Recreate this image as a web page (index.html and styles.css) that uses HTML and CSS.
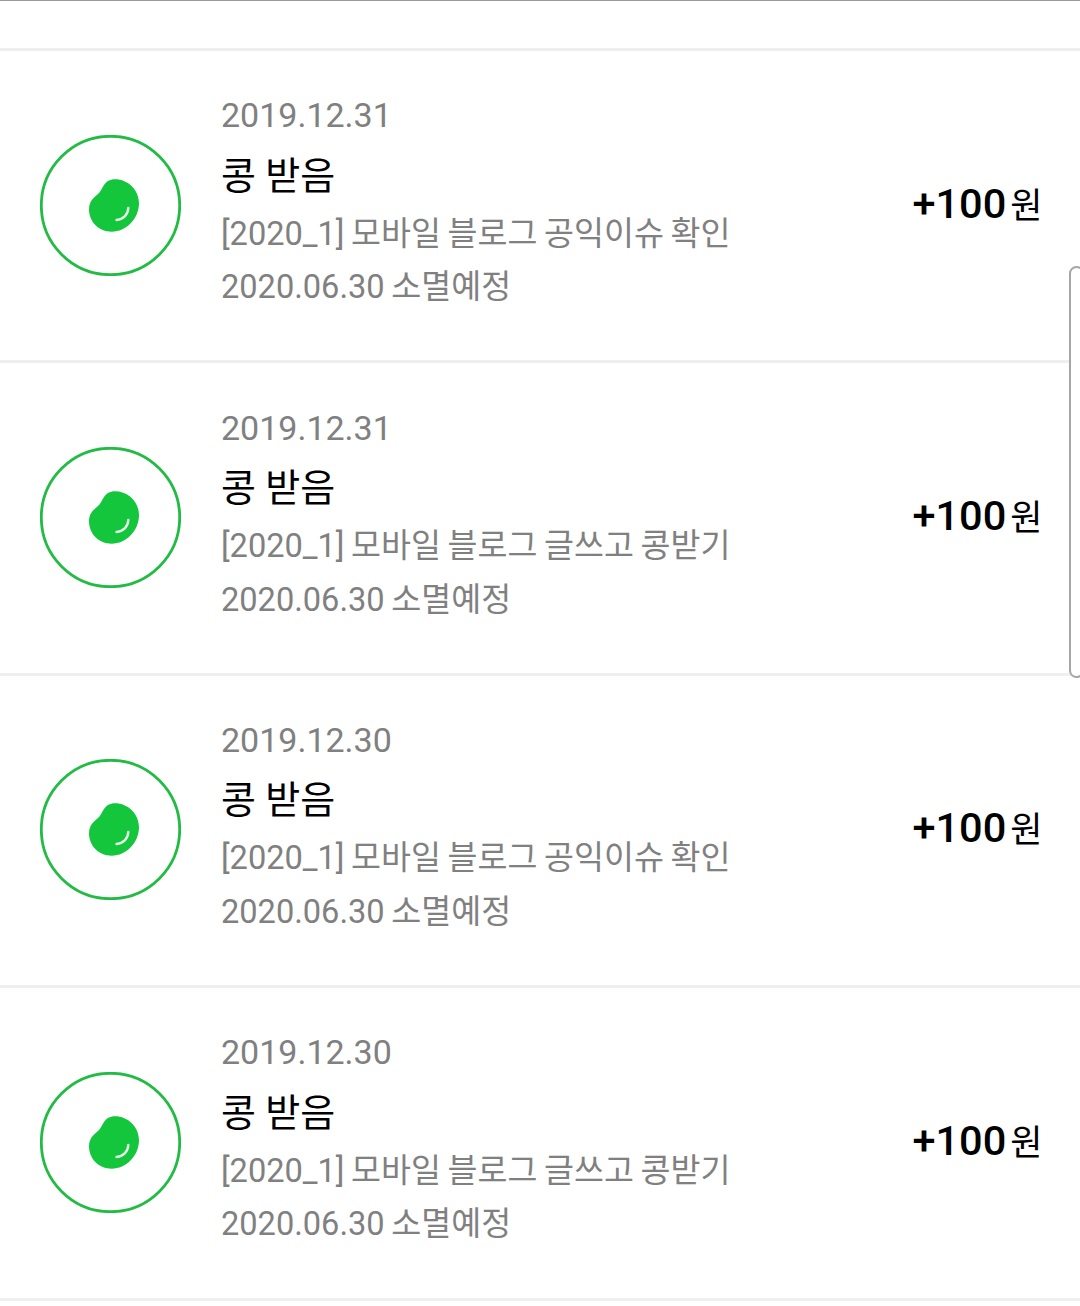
FILE: index.html
```html
<!DOCTYPE html>
<html lang="ko">
<head>
<meta charset="utf-8">
<title>콩 내역</title>
<link rel="stylesheet" href="styles.css">
</head>
<body>
<svg class="defs" width="0" height="0" aria-hidden="true">
  <symbol id="bean" viewBox="0 0 141 141">
    <circle cx="70.5" cy="70.5" r="69.2" fill="#fff" stroke="#22bb44" stroke-width="2.8"/>
    <path d="M75 44.3C88 44.3 99 55 99 68C99 84 86 96.7 71.7 96.7C59 96.7 49 87 49 74.3C49 65 55 62 59 58C63 54 64 44.3 75 44.3Z" fill="#14c63c"/>
    <path d="M88.3 73C88 80 83 84.5 76.5 85" fill="none" stroke="#e8f8ea" stroke-width="2.4" stroke-linecap="round"/>
  </symbol>
</svg>
<main class="page">
  <div class="top"></div>
  <ul class="list">
    <li class="row">
      <svg class="icon"><use href="#bean"/></svg>
      <div class="info">
        <div class="date">2019.12.31</div>
        <div class="title">콩 받음</div>
        <div class="desc">[2020_1] 모바일 블로그 공익이슈 확인</div>
        <div class="desc">2020.06.30 소멸예정</div>
      </div>
      <div class="amount"><b>+100</b><span>원</span></div>
    </li>
    <li class="row">
      <svg class="icon"><use href="#bean"/></svg>
      <div class="info">
        <div class="date">2019.12.31</div>
        <div class="title">콩 받음</div>
        <div class="desc">[2020_1] 모바일 블로그 글쓰고 콩받기</div>
        <div class="desc">2020.06.30 소멸예정</div>
      </div>
      <div class="amount"><b>+100</b><span>원</span></div>
    </li>
    <li class="row">
      <svg class="icon"><use href="#bean"/></svg>
      <div class="info">
        <div class="date">2019.12.30</div>
        <div class="title">콩 받음</div>
        <div class="desc">[2020_1] 모바일 블로그 공익이슈 확인</div>
        <div class="desc">2020.06.30 소멸예정</div>
      </div>
      <div class="amount"><b>+100</b><span>원</span></div>
    </li>
    <li class="row">
      <svg class="icon"><use href="#bean"/></svg>
      <div class="info">
        <div class="date">2019.12.30</div>
        <div class="title">콩 받음</div>
        <div class="desc">[2020_1] 모바일 블로그 글쓰고 콩받기</div>
        <div class="desc">2020.06.30 소멸예정</div>
      </div>
      <div class="amount"><b>+100</b><span>원</span></div>
    </li>
  </ul>
  <div class="handle"></div>
</main>
</body>
</html>
```
FILE: styles.css
```css
* { box-sizing: border-box; }
html, body { margin: 0; padding: 0; background: #fff; }
body { font-family: Roboto, "Noto Sans CJK KR", sans-serif; overflow: hidden; }
.defs { position: absolute; }
.page { position: relative; width: 1080px; height: 1306px; overflow: hidden; }
.top { height: 51px; border-top: 1px solid #999; border-bottom: 3px solid #efefef; }
.list { list-style: none; margin: 0; padding: 0; }
.row { display: flex; align-items: center; height: 312.4px; padding: 0 37.5px 0 39.6px; border-bottom: 3px solid #efefef; }
.icon { width: 141px; height: 141px; flex: none; margin-bottom: 1px; }
.info { flex: 1; margin-left: 40.4px; padding-bottom: 10.5px; }
.date { font-size: 34px; line-height: 59.5px; color: #808080; }
.title { font-size: 38px; line-height: 60.5px; color: #000; margin-bottom: 1.5px; }
.desc { font-size: 32.6px; line-height: 53.5px; color: #808080; white-space: nowrap; word-spacing: -1.5px; }
.amount { display: flex; align-items: baseline; gap: 4px; color: #000; margin-top: -7px; }
.amount b { font-size: 41.5px; font-weight: 500; }
.amount span { font-size: 35px; }
.handle { position: absolute; right: -4px; top: 266px; width: 15px; height: 412px; border: 2px solid #a6a6a6; border-radius: 12px; background: #fff; }
```
